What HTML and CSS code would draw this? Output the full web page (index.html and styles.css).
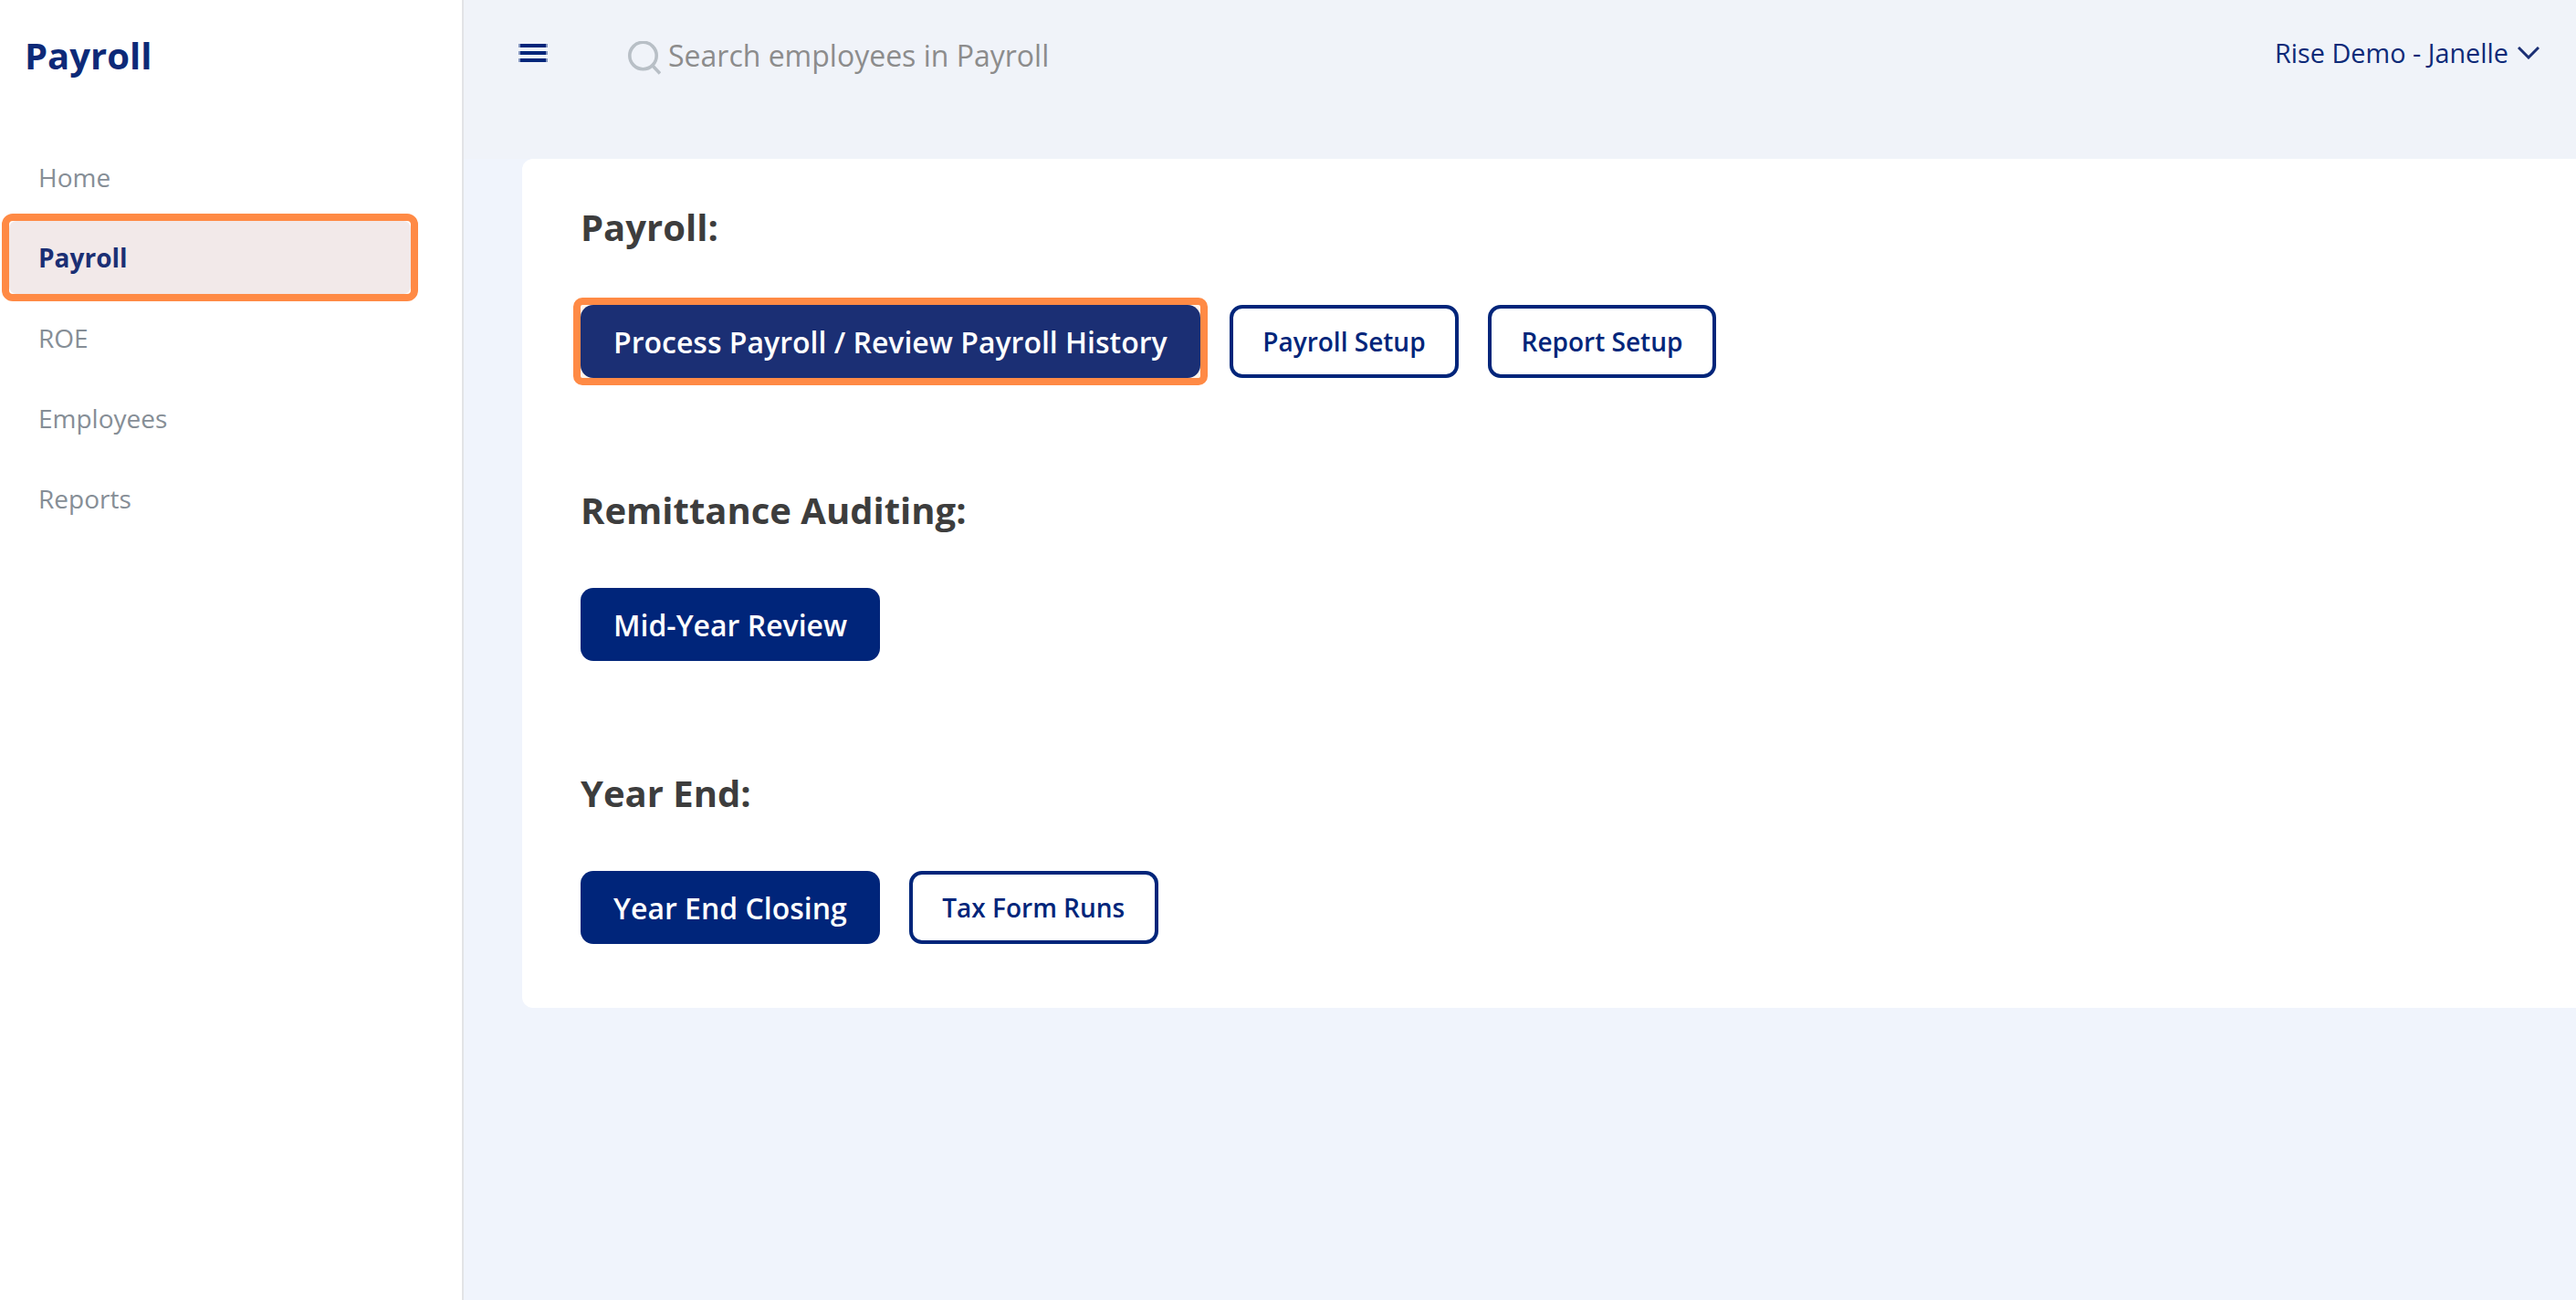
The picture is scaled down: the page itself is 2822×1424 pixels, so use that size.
FILE: index.html
```html
<!DOCTYPE html>
<html lang="en">
<head>
<meta charset="utf-8">
<title>Payroll</title>
<link rel="stylesheet" href="styles.css">
</head>
<body>
<aside class="sidebar">
  <div class="brand">Payroll</div>
  <nav class="nav">
    <a class="nav-item">Home</a>
    <a class="nav-item nav-item-active">Payroll</a>
    <a class="nav-item">ROE</a>
    <a class="nav-item">Employees</a>
    <a class="nav-item">Reports</a>
  </nav>
</aside>
<div class="main">
  <header class="topbar">
    <svg class="menu-icon" viewBox="0 0 32 20" aria-hidden="true"><path class="menu-icon-edge" d="M0 0h32v4H0zM0 8h32v4H0zM0 16h32v4H0z"/><path d="M2 0h28v4H2zM2 8h28v4H2zM2 16h28v4H2z"/></svg>
    <div class="search">
      <svg class="search-icon" viewBox="0 0 36 38" aria-hidden="true"><circle cx="16.500" cy="16" r="14.700"/><path d="M27 27L35 35.500"/></svg>
      <span class="search-text">Search employees in Payroll</span>
    </div>
    <div class="user">
      <span>Rise Demo - Janelle</span>
      <svg class="chevron" viewBox="0 0 24 14" aria-hidden="true"><path d="M1 1l11 11L23 1"/></svg>
    </div>
  </header>
  <section class="card">
    <div class="group">
      <h2 class="group-title">Payroll:</h2>
      <div class="actions">
        <span class="mark"><button class="btn btn-primary btn-marked">Process Payroll / Review Payroll History</button></span>
        <button class="btn btn-outline">Payroll Setup</button>
        <button class="btn btn-outline">Report Setup</button>
      </div>
    </div>
    <div class="group">
      <h2 class="group-title">Remittance Auditing:</h2>
      <div class="actions">
        <button class="btn btn-primary">Mid-Year Review</button>
      </div>
    </div>
    <div class="group">
      <h2 class="group-title">Year End:</h2>
      <div class="actions">
        <button class="btn btn-primary">Year End Closing</button>
        <button class="btn btn-outline">Tax Form Runs</button>
      </div>
    </div>
  </section>
</div>
</body>
</html>
```
FILE: styles.css
```css
* { box-sizing: border-box; }
html, body { height: 100%; }
body {
  margin: 0;
  display: flex;
  overflow: hidden;
  background: #f0f4fc;
  font-family: "Open Sans", "Noto Sans", sans-serif;
}
.sidebar {
  flex: 0 0 508px;
  background: #fff;
  border-right: 2px solid #e2e3e6;
}
.brand {
  height: 154px;
  padding: 35px 0 0 27px;
  font-size: 40px;
  line-height: 52px;
  font-weight: 700;
  color: #0d2a78;
}
.nav { display: flex; flex-direction: column; gap: 8px; }
.nav-item {
  height: 80px;
  display: flex;
  align-items: center;
  margin: 0 56px 0 10px;
  padding-left: 32px;
  font-size: 28px;
  color: #868e96;
}
.nav-item-active {
  position: relative;
  background: #f2e9e9;
  border-radius: 8px;
  color: #1b2f74;
  font-weight: 700;
}
.nav-item-active::after {
  content: "";
  position: absolute;
  inset: -8px;
  border: 8px solid #ff8a45;
  border-radius: 12px;
}
.main { flex: 1; min-width: 0; }
.topbar {
  height: 174px;
  display: flex;
  align-items: flex-start;
  padding: 48px 40px 0 60px;
  background: #f0f3f9;
}
.menu-icon { width: 32px; height: 20px; fill: #00257a; flex: none; }
.menu-icon-edge { opacity: 0.45; }
.search {
  margin-left: 88px;
  margin-top: -6px;
  display: flex;
  align-items: center;
  gap: 8px;
}
.search-icon { width: 36px; height: 38px; fill: none; stroke: #b8bfc6; stroke-width: 3.600; flex: none; }
.search-text { font-size: 32px; line-height: 44px; color: #8c8c8c; position: relative; top: -3px; }
.user {
  margin-left: auto;
  margin-top: -8px;
  display: flex;
  align-items: center;
  gap: 10px;
  font-size: 28.800px;
  line-height: 36px;
  font-weight: 500;
  color: #0d2a78;
}
.chevron { width: 24px; height: 14px; fill: none; stroke: #1b2f74; stroke-width: 3; flex: none; }
.card {
  margin-left: 64px;
  padding: 50px 64px 70px;
  background: #fff;
  border-radius: 12px 0 0 12px;
  display: flex;
  flex-direction: column;
  gap: 120px;
}
.group-title {
  margin: 0 0 60px;
  font-size: 40px;
  line-height: 50px;
  font-weight: 700;
  color: #3d3d3d;
}
.actions { display: flex; align-items: center; gap: 32px; }
.btn {
  height: 80px;
  border-radius: 14px;
  font-family: inherit;
  cursor: pointer;
}
.btn-primary {
  padding: 0 36px;
  border: 0;
  background: #00257a;
  color: #fff;
  font-size: 32px;
  font-weight: 600;
}
.btn-outline {
  padding: 0 32.500px;
  border: 4px solid #00257a;
  background: #fff;
  color: #00257a;
  font-size: 28px;
  font-weight: 600;
}
.mark {
  display: block;
  margin: -8px;
  border: 8px solid #ff8a45;
  border-radius: 10px;
  background: #fff4ec;
}
.btn-marked { display: block; background: #1b2f74; }
```
